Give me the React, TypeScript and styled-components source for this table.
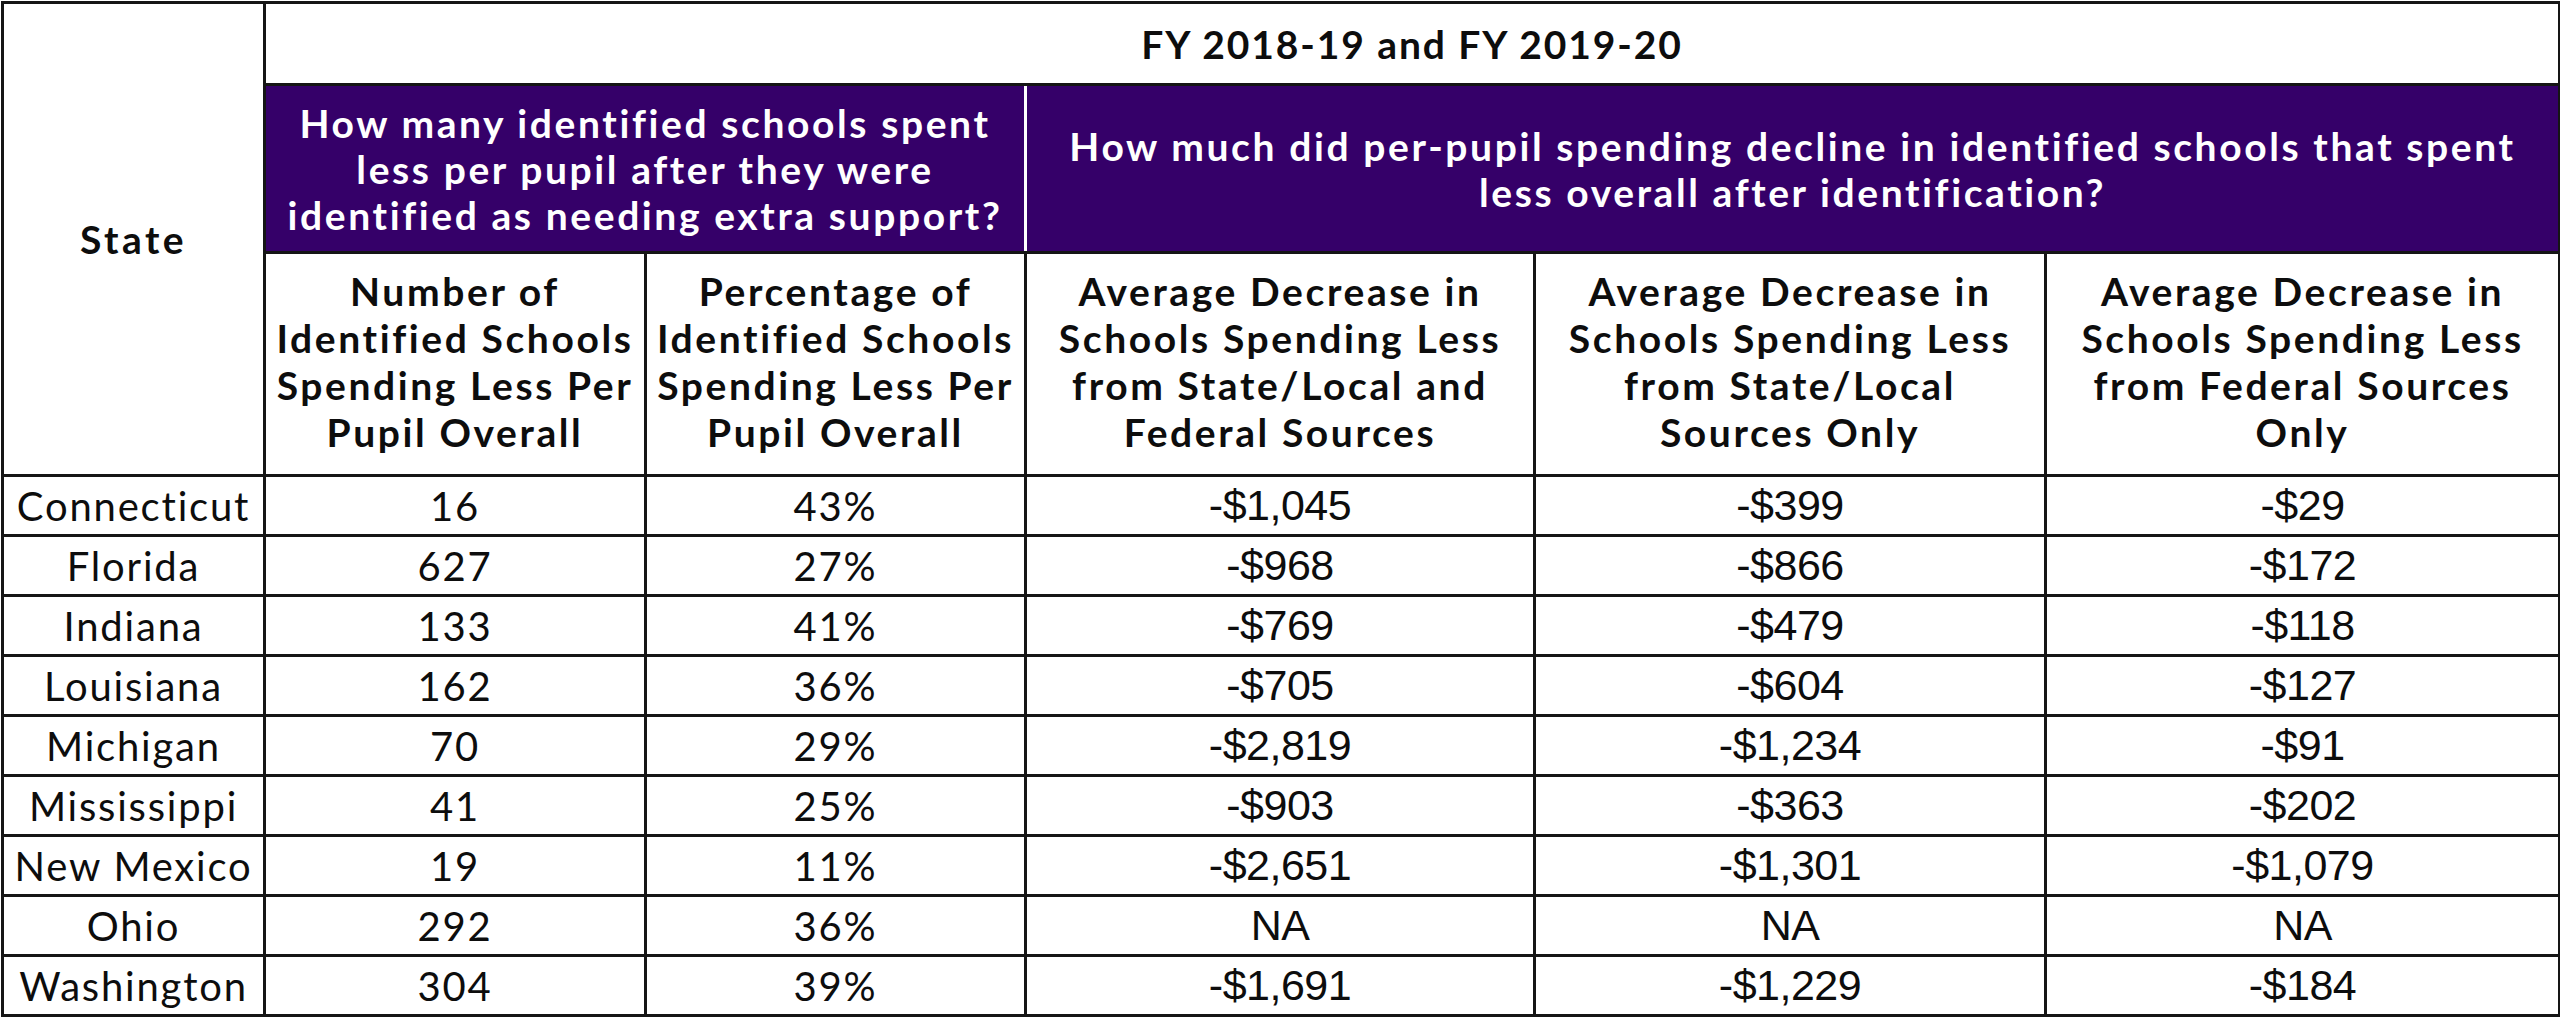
import React from "react";
import styled, { createGlobalStyle } from "styled-components";

const Global = createGlobalStyle`
  html, body { margin: 0; padding: 0; background: #ffffff; }
  body { font-family: "Lato", "Open Sans", sans-serif; color: #0d0d0d; }
`;

const Page = styled.div`
  padding: 1px 0 0 1px;
  width: 2560px;
  box-sizing: border-box;
`;

const Table = styled.table`
  border-collapse: collapse;
  table-layout: fixed;
  width: 2557px;
  border: 3px solid #151515;
`;

const Cell = styled.td<{ $h?: number }>`
  border: 3px solid #151515;
  text-align: center;
  vertical-align: middle;
  padding: 0;
  height: ${(p) => (p.$h ? `${p.$h}px` : "auto")};
  box-sizing: border-box;
  white-space: nowrap;
`;

const BoldCell = styled(Cell)`
  font-family: "Lato", sans-serif;
  font-weight: 700;
  font-size: 39px;
  line-height: 46px;
  letter-spacing: 2.6px;
`;

const StateHead = styled(BoldCell)`
  letter-spacing: 3.5px;
`;

const YearHead = styled(BoldCell)`
  letter-spacing: 1.9px;
`;

const Question = styled(BoldCell)<{ $divider?: boolean }>`
  background: #350069;
  color: #ffffff;
  letter-spacing: 2.6px;
  border-right: ${(p) => (p.$divider ? "3px solid #ffffff" : "3px solid #151515")};
`;

const ColHead = styled(BoldCell)`
  line-height: 47px;
  padding-bottom: 4px;
`;

const StateName = styled(Cell)`
  font-family: "Lato", sans-serif;
  font-weight: 400;
  font-size: 40px;
  letter-spacing: 1.8px;
`;

const Count = styled(StateName)``;

const Money = styled(Cell)`
  font-family: "Liberation Sans", Arial, sans-serif;
  font-weight: 400;
  font-size: 43px;
  letter-spacing: -0.5px;
`;

type Row = {
  state: string;
  count: string;
  pct: string;
  total: string;
  local: string;
  federal: string;
};

const rows: Row[] = [
  { state: "Connecticut", count: "16", pct: "43%", total: "-$1,045", local: "-$399", federal: "-$29" },
  { state: "Florida", count: "627", pct: "27%", total: "-$968", local: "-$866", federal: "-$172" },
  { state: "Indiana", count: "133", pct: "41%", total: "-$769", local: "-$479", federal: "-$118" },
  { state: "Louisiana", count: "162", pct: "36%", total: "-$705", local: "-$604", federal: "-$127" },
  { state: "Michigan", count: "70", pct: "29%", total: "-$2,819", local: "-$1,234", federal: "-$91" },
  { state: "Mississippi", count: "41", pct: "25%", total: "-$903", local: "-$363", federal: "-$202" },
  { state: "New Mexico", count: "19", pct: "11%", total: "-$2,651", local: "-$1,301", federal: "-$1,079" },
  { state: "Ohio", count: "292", pct: "36%", total: "NA", local: "NA", federal: "NA" },
  { state: "Washington", count: "304", pct: "39%", total: "-$1,691", local: "-$1,229", federal: "-$184" },
];

const colWidths = [262, 381, 380, 509, 511, 514];

const Lines = ({ lines }: { lines: string[] }) => (
  <>
    {lines.map((l, i) => (
      <React.Fragment key={i}>
        {i > 0 && <br />}
        {l}
      </React.Fragment>
    ))}
  </>
);

const colHeads: string[][] = [
  ["Number of", "Identified Schools", "Spending Less Per", "Pupil Overall"],
  ["Percentage of", "Identified Schools", "Spending Less Per", "Pupil Overall"],
  ["Average Decrease in", "Schools Spending Less", "from State/Local and", "Federal Sources"],
  ["Average Decrease in", "Schools Spending Less", "from State/Local", "Sources Only"],
  ["Average Decrease in", "Schools Spending Less", "from Federal Sources", "Only"],
];

export default function App() {
  return (
    <Page>
      <Global />
      <Table>
        <colgroup>
          {colWidths.map((w, i) => (
            <col key={i} style={{ width: w }} />
          ))}
        </colgroup>
        <thead>
          <tr>
            <StateHead as="th" rowSpan={3}>State</StateHead>
            <YearHead as="th" colSpan={5} $h={82}>FY 2018-19 and FY 2019-20</YearHead>
          </tr>
          <tr>
            <Question as="th" colSpan={2} $h={168} $divider>
              <Lines
                lines={[
                  "How many identified schools spent",
                  "less per pupil after they were",
                  "identified as needing extra support?",
                ]}
              />
            </Question>
            <Question as="th" colSpan={3} $h={168}>
              <Lines
                lines={[
                  "How much did per-pupil spending decline in identified schools that spent",
                  "less overall after identification?",
                ]}
              />
            </Question>
          </tr>
          <tr>
            {colHeads.map((h, i) => (
              <ColHead as="th" key={i} $h={i === 0 ? 223 : undefined}>
                <Lines lines={h} />
              </ColHead>
            ))}
          </tr>
        </thead>
        <tbody>
          {rows.map((r) => (
            <tr key={r.state}>
              <StateName $h={60}>{r.state}</StateName>
              <Count>{r.count}</Count>
              <Count>{r.pct}</Count>
              <Money>{r.total}</Money>
              <Money>{r.local}</Money>
              <Money>{r.federal}</Money>
            </tr>
          ))}
        </tbody>
      </Table>
    </Page>
  );
}
